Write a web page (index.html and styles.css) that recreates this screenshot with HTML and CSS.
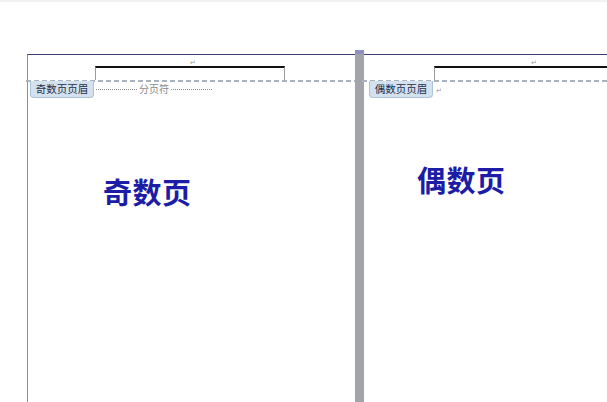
FILE: index.html
```html
<!DOCTYPE html>
<html lang="zh-CN">
<head>
    <meta charset="UTF-8">
    <title>奇偶页不同页眉</title>
    <link rel="stylesheet" href="styles.css">
</head>
<body>
    <div class="topbar"></div>

    <!-- two pages side by side -->
    <div class="workspace">
        <div class="page page-odd">
            <div class="header-area">
                <div class="header-line">
                    <span class="para-mark">↵</span>
                </div>
            </div>
            <div class="header-rule"></div>
            <div class="tab-row">
                <div class="header-tab">奇数页页眉</div>
                <div class="page-break">
                    <span class="dots"></span>
                    <span class="break-text">分页符</span>
                    <span class="dots"></span>
                </div>
            </div>
            <h1 class="page-title">奇数页</h1>
        </div>

        <div class="gutter"></div>

        <div class="page page-even">
            <div class="header-area">
                <div class="header-line">
                    <span class="para-mark">↵</span>
                </div>
            </div>
            <div class="header-rule"></div>
            <div class="tab-row">
                <div class="header-tab">偶数页页眉</div>
                <span class="tab-mark">↵</span>
            </div>
            <h1 class="page-title">偶数页</h1>
        </div>
    </div>
</body>
</html>
```

FILE: styles.css
```css
body {
    margin: 0;
    background: #fff;
    font-family: "Noto Sans CJK SC", "Noto Sans", sans-serif;
    overflow: hidden;
    height: 402px;
}

.topbar {
    height: 2px;
    background: #f1f1f1;
}

.workspace {
    display: flex;
    padding-top: 48px;
    padding-left: 27px;
    height: 360px;
}

/* Pages */
.page {
    margin-top: 4px;
    border-top: 1px solid #3d3c72;
    position: relative;
}

.page-odd {
    width: 327px;
    border-left: 1px solid #8e8ca8;
}

.page-even {
    flex: 1;
    min-width: 0;
}

.gutter {
    width: 9px;
    background: #a3a3ab;
    border-top: 4px solid #8f8fc0;
}

/* Header zone */
.header-area {
    padding-top: 11px;
    height: 14px;
}

.header-line {
    position: relative;
    height: 12px;
    border-top: 2px solid #111;
    border-left: 1px solid #9a9a9a;
    border-right: 1px solid #9a9a9a;
}

.page-odd .header-line {
    margin-left: 67px;
    width: 188px;
}

.page-even .header-line {
    margin-left: 70px;
    margin-right: -20px;
}

.para-mark {
    position: absolute;
    top: -9px;
    font-size: 7px;
    color: #999;
    line-height: 7px;
}

.page-odd .para-mark {
    left: 94px;
}

.page-even .para-mark {
    left: 96px;
}

.header-rule {
    height: 2px;
    margin-left: -2px;
    background: repeating-linear-gradient(to right, #a8b3bf 0 5px, transparent 5px 8px);
}

.tab-row {
    display: flex;
    align-items: flex-start;
    margin-top: -1px;
}

.header-tab {
    margin-left: 2px;
    width: 64px;
    height: 17px;
    box-sizing: border-box;
    background: #d4e2ef;
    border: 1px solid #abc3da;
    border-top: none;
    border-radius: 0 0 4px 4px;
    font-size: 10.5px;
    line-height: 16px;
    text-align: center;
    color: #1d2f4a;
}

.page-even .header-tab {
    margin-left: 5px;
}

.tab-mark {
    font-size: 7px;
    color: #999;
    margin: 6px 0 0 3px;
    line-height: 7px;
}

/* Page break marker */
.page-break {
    display: flex;
    align-items: center;
    width: 116px;
    margin-left: 2px;
    height: 16px;
}

.dots {
    flex: 1;
    border-top: 1px dotted #8a8a8a;
    margin-top: 1px;
}

.break-text {
    font-size: 10px;
    color: #8a8a8a;
    padding: 0 2px;
    line-height: 12px;
}

/* Big page labels */
.page-title {
    margin: 0;
    font-size: 29px;
    font-weight: bold;
    line-height: 30px;
    color: #1c1ca6;
    letter-spacing: 0.5px;
}

.page-odd .page-title {
    margin: 78px 0 0 75px;
}

.page-even .page-title {
    margin: 66px 0 0 53px;
}
```
